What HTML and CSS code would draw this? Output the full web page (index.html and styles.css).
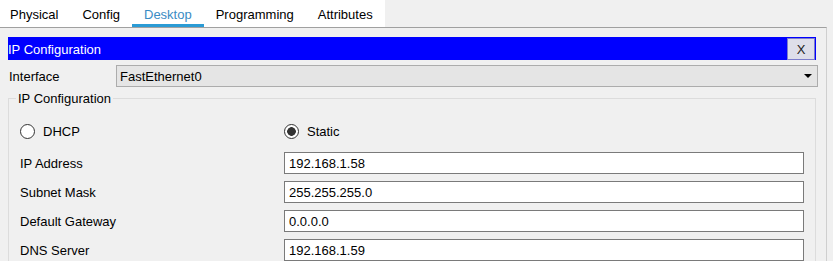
FILE: index.html
```html
<!DOCTYPE html>
<html>
<head>
  <title>IP Configuration</title>
  <link rel="stylesheet" href="styles.css">
</head>
<body>
  <div class="tabs">
    <span class="tab first">Physical</span>
    <span class="tab">Config</span>
    <span class="tab active">Desktop</span>
    <span class="tab">Programming</span>
    <span class="tab">Attributes</span>
  </div>

  <div class="panel">
    <div class="title-bar">
      <span class="title">IP Configuration</span>
      <span class="close-btn">X</span>
    </div>

    <div class="iface-row">
      <span class="iface-label">Interface</span>
      <div class="select">
        <span>FastEthernet0</span>
        <span class="arrow"></span>
      </div>
    </div>

    <fieldset class="ip-config">
      <legend>IP Configuration</legend>
      <div class="row radio-row">
        <label class="radio"><span class="dot"></span>DHCP</label>
        <label class="radio checked"><span class="dot"></span>Static</label>
      </div>
      <div class="row">
        <span class="label">IP Address</span>
        <div class="field">192.168.1.58</div>
      </div>
      <div class="row">
        <span class="label">Subnet Mask</span>
        <div class="field">255.255.255.0</div>
      </div>
      <div class="row">
        <span class="label">Default Gateway</span>
        <div class="field">0.0.0.0</div>
      </div>
      <div class="row">
        <span class="label">DNS Server</span>
        <div class="field">192.168.1.59</div>
      </div>
    </fieldset>
  </div>
</body>
</html>
```

FILE: styles.css
```css
body {
  font-family: "Liberation Sans", Arial, sans-serif;
  font-size: 13px;
  color: #000;
  background-color: #f0f0f0;
  margin: 0;
  height: 261px;
  overflow: hidden;
}

.tabs {
  display: inline-flex;
  background-color: #fff;
  height: 27px;
  vertical-align: top;
}

.tab {
  box-sizing: border-box;
  height: 27px;
  padding: 0 12px;
  line-height: 29px;
}

.tab.first {
  padding-left: 10px;
}

.tab.active {
  color: #3a8cc4;
  border-bottom: 3px solid #2a9bd5;
}

.panel {
  box-sizing: border-box;
  width: 827px;
  height: 234px;
  border-top: 1px solid #a0a0a0;
  border-right: 1px solid #cfcfcf;
  padding: 9px 0 0 8px;
  overflow: hidden;
}

.title-bar {
  display: flex;
  justify-content: space-between;
  align-items: center;
  width: 808px;
  height: 23px;
  background-color: #0000ff;
  color: #fff;
}

.title {
  padding-top: 2px;
}

.close-btn {
  width: 26px;
  height: 20px;
  line-height: 21px;
  margin-right: 1px;
  text-align: center;
  color: #222;
  background-color: #dedeea;
  border: 1px solid #7c7ccc;
}

.iface-row {
  display: flex;
  align-items: center;
  margin-top: 5px;
  height: 22px;
}

.iface-label {
  width: 107px;
  padding-left: 1px;
}

.select {
  display: flex;
  justify-content: space-between;
  align-items: center;
  width: 697px;
  height: 20px;
  padding-left: 3px;
  background-color: #e5e5e5;
  border: 1px solid #acacac;
}

.arrow {
  width: 0;
  height: 0;
  margin-right: 5px;
  border-left: 4px solid transparent;
  border-right: 4px solid transparent;
  border-top: 4px solid #000;
}

.ip-config {
  width: 785px;
  margin: 4px 0 0 0;
  padding: 14px 10px 0 11px;
  border: 1px solid #dcdcdc;
  border-bottom: none;
}

.ip-config legend {
  padding: 0 2px;
  margin-left: -4px;
  line-height: 15px;
}

.row {
  display: flex;
  align-items: center;
  height: 22px;
  margin-bottom: 7px;
}

.radio-row {
  margin-bottom: 10px;
}

.label {
  width: 264px;
}

.radio {
  display: flex;
  align-items: center;
  width: 264px;
}

.radio .dot {
  box-sizing: border-box;
  width: 15px;
  height: 15px;
  margin-right: 8px;
  border: 1px solid #333;
  border-radius: 50%;
  background-color: #fff;
}

.radio.checked .dot {
  background: radial-gradient(circle, #333 0, #333 4px, #fff 4.6px);
}

.field {
  box-sizing: border-box;
  width: 520px;
  height: 22px;
  line-height: 21px;
  padding-left: 4px;
  background-color: #fff;
  border: 1px solid #7a7a7a;
}
```
